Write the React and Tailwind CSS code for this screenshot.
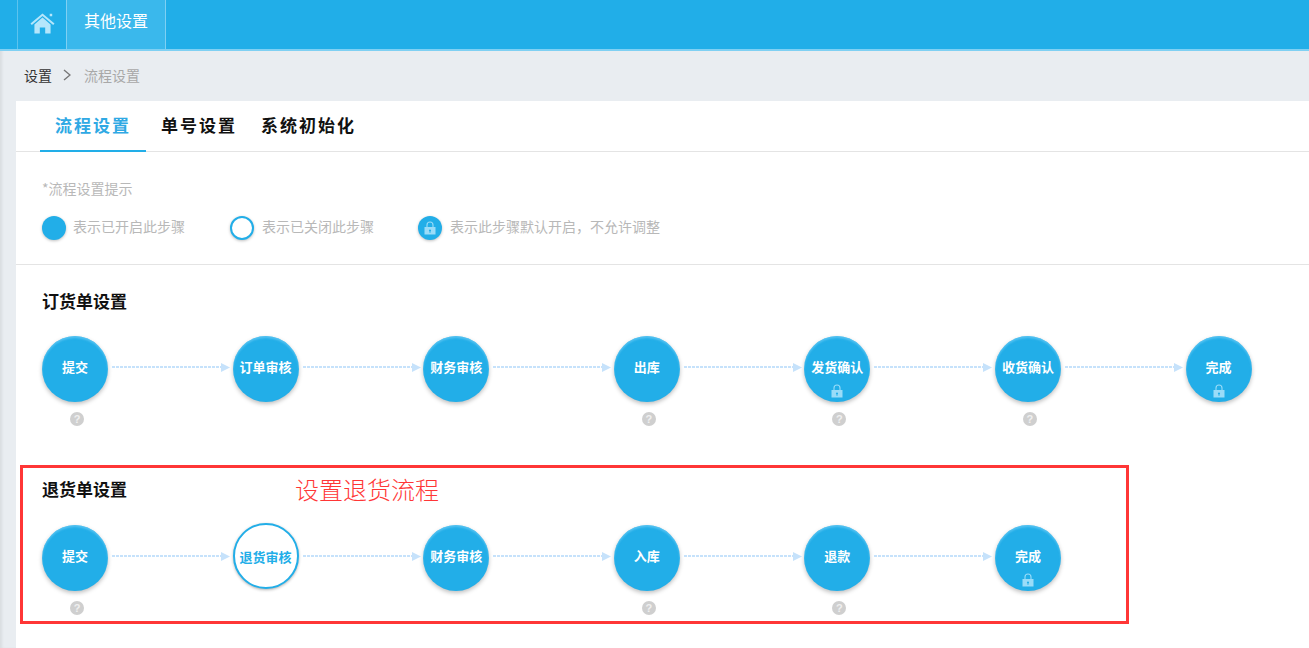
import React from "react";

const Lock = ({ className = "" }) => (
  <svg viewBox="0 0 12 14" className={className} fill="none">
    <path d="M3 6.5V4a3 3 0 0 1 6 0v2.5" stroke="currentColor" strokeWidth="1.1" />
    <path fillRule="evenodd" clipRule="evenodd" d="M0.5 6h11v7.5h-11zM6 8.4a1 1 0 0 0-.5 1.9v1.4h1v-1.4A1 1 0 0 0 6 8.4z" fill="currentColor" />
  </svg>
);

const Help = () => (
  <div className="w-[14px] h-[14px] rounded-full bg-[#cfcfcf] text-[#f0f0f0] text-[11px] leading-[14px] font-bold text-center font-['Liberation_Sans',sans-serif]">?</div>
);

const Arrow = () => (
  <div className="flex items-center ml-[4px] mt-[-2px] h-[66px] w-[118px] shrink-0">
    <div className="flex-1 h-[2px] bg-[repeating-linear-gradient(90deg,#c6e2fb_0,#c6e2fb_3px,transparent_3px,transparent_4px)]" />
    <svg width="9" height="9" viewBox="0 0 9 9" className="shrink-0"><path d="M0 0L9 4.5L0 9z" fill="#c6e2fb" /></svg>
  </div>
);

const Step = ({ label, help, lock, off, last }) => (
  <div className="w-[190.6px] shrink-0">
    <div className="flex">
      {off ? (
        <div className="relative w-[66px] h-[66px] mt-[-2px] mb-[2px] rounded-full bg-white border-2 border-[#22aee8] shadow-[0_1px_3px_rgba(0,0,0,0.3)] flex items-center justify-center text-[#22aee8] text-[13px] font-bold pt-[2px] shrink-0">
          {label}
        </div>
      ) : (
        <div className="relative w-[66px] h-[66px] rounded-full bg-[#22aee8] shadow-[0_2px_4px_rgba(0,0,0,0.25),inset_0_2px_2px_rgba(120,210,250,0.55)] flex items-center justify-center text-white text-[13px] font-bold pb-[5px] shrink-0">
          {label}
          {lock && <Lock className="absolute left-[27px] bottom-[4px] w-[12px] h-[14px] text-[#9adcf8]" />}
        </div>
      )}
      {!last && <Arrow />}
    </div>
    <div className="h-[14px] mt-[10px] pl-[28px]">{help && <Help />}</div>
  </div>
);

const row1 = [
  { label: "提交", help: true },
  { label: "订单审核" },
  { label: "财务审核" },
  { label: "出库", help: true },
  { label: "发货确认", help: true, lock: true },
  { label: "收货确认", help: true },
  { label: "完成", lock: true, last: true },
];

const row2 = [
  { label: "提交", help: true },
  { label: "退货审核", off: true },
  { label: "财务审核" },
  { label: "入库", help: true },
  { label: "退款", help: true },
  { label: "完成", lock: true, last: true },
];

const Legend = ({ children, text, className = "" }) => (
  <div className={`flex items-center ${className}`}>
    {children}
    <span className="text-[14px] text-[#b8b8b8] leading-[24px] mt-[-4px]">{text}</span>
  </div>
);

export default function App() {
  return (
    <div className="relative h-[648px] w-[1309px] overflow-hidden bg-[#e9edf1] shadow-[inset_3px_0_3px_-1px_rgba(0,0,0,0.07)] font-['Noto_Sans_CJK_SC','Liberation_Sans',sans-serif]">
      <header className="h-[51px] bg-[#21aee8] border-b-2 border-[#7fd0f3] flex pl-[17px]">
        <div className="w-[49px] border-l border-[#5cc3ee] flex items-center justify-center">
          <svg viewBox="0 0 26 22" className="w-[25px] h-[22px] mt-[-3px]" fill="#b5e6fb">
            <path d="M0.5 11.6L13 1l12.5 10.6-1.4 1.4L13 3.6 1.9 13z" />
            <path d="M20.5 1.4h2.6V4h-2.6z" />
            <path d="M4.6 12.6L13 5.4l8.4 7.2V22h-5.6v-6.4h-5.6V22H4.6z" />
          </svg>
        </div>
        <div className="w-[100px] bg-[#3ab8ec] border-x border-[#7fd0f3] text-white text-[16px] leading-[40px] pl-[17px]">其他设置</div>
      </header>

      <div className="h-[50px] flex items-center pl-[24px] text-[14px] pb-[2px]">
        <span className="text-[#333333]">设置</span>
        <svg viewBox="0 0 8 12" className="w-[8px] h-[12px] ml-[11px] mr-[13px]" fill="none" stroke="#777777" strokeWidth="1.4"><path d="M1 1l6 5-6 5" /></svg>
        <span className="text-[#a8a8a8]">流程设置</span>
      </div>

      <main className="ml-[16px] h-[547px] bg-white">
        <nav className="h-[51px] border-b border-[#e4e4e4] flex pl-[24px] text-[17px] font-bold tracking-[2px]">
          <div className="h-[51px] px-[15px] border-b-2 border-[#22aee8] text-[#2fa9e4] leading-[48px]">流程设置</div>
          <div className="pl-[15px] pr-[9px] text-[#111111] leading-[48px]">单号设置</div>
          <div className="text-[#111111] leading-[48px] px-[15px]">系统初始化</div>
        </nav>

        <section className="h-[113px] border-b border-[#e4e4e4] pl-[26px] pt-[25px]">
          <p className="text-[14px] leading-[22px] text-[#b8b8b8]">*流程设置提示</p>
          <div className="flex mt-[17px]">
            <Legend text="表示已开启此步骤" className="w-[188px]">
              <div className="w-[24px] h-[24px] rounded-full bg-[#22aee8] shadow-[0_1px_3px_rgba(0,0,0,0.25)] mr-[7px]" />
            </Legend>
            <Legend text="表示已关闭此步骤" className="w-[188px]">
              <div className="w-[24px] h-[24px] rounded-full bg-white border-2 border-[#22aee8] shadow-[0_1px_3px_rgba(0,0,0,0.25)] mr-[8px]" />
            </Legend>
            <Legend text="表示此步骤默认开启，不允许调整">
              <div className="w-[24px] h-[24px] rounded-full bg-[#22aee8] shadow-[0_1px_3px_rgba(0,0,0,0.25)] mr-[8px] flex items-center justify-center">
                <Lock className="w-[12px] h-[14px] text-[#9adcf8]" />
              </div>
            </Legend>
          </div>
        </section>

        <section className="pl-[26px] pt-[24px]">
          <h2 className="text-[17px] leading-[24px] font-bold text-[#111111]">订货单设置</h2>
          <div className="flex mt-[23px]">
            {row1.map((s, i) => <Step key={i} {...s} />)}
          </div>
          <h2 className="text-[17px] leading-[24px] font-bold text-[#111111] mt-[51px]">退货单设置</h2>
          <div className="flex mt-[24px]">
            {row2.map((s, i) => <Step key={i} {...s} />)}
          </div>
        </section>
      </main>

      <div className="absolute left-[20px] top-[465px] w-[1109px] h-[159px] border-[3px] border-[#ff3636] pointer-events-none">
        <span className="absolute left-[272px] top-[3px] text-[24px] leading-[36px] font-light text-[#ff3636] whitespace-nowrap">设置退货流程</span>
      </div>
    </div>
  );
}
